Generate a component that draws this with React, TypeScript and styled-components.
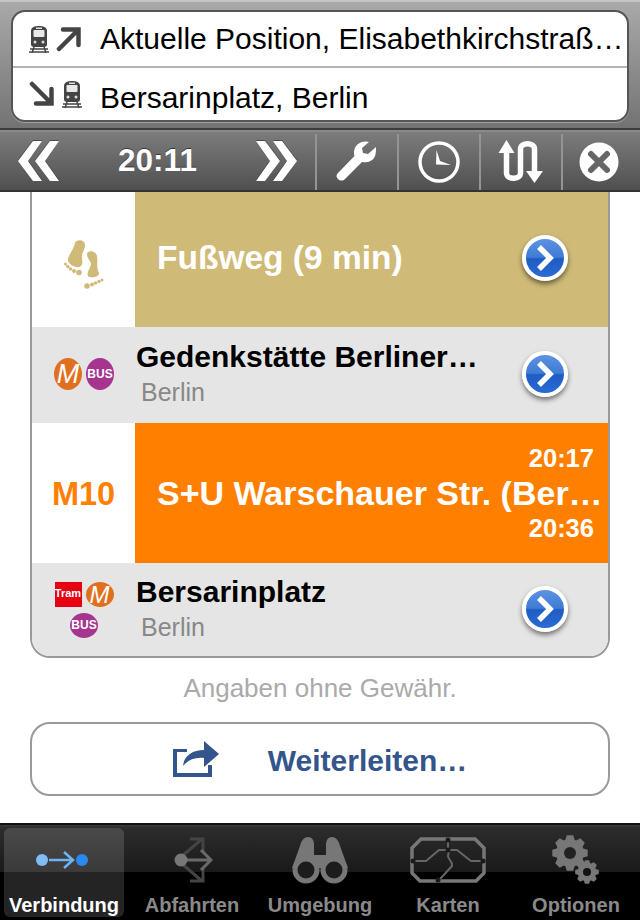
import React from 'react';
import styled, { createGlobalStyle } from 'styled-components';

const Global = createGlobalStyle`
html, body { margin: 0; padding: 0; background: #fff; }
body { font-family: "Liberation Sans", Arial, sans-serif; }
* { box-sizing: border-box; }
`;

const TrainIcon: React.FC = () => (
  <svg width="20" height="28" viewBox="0 0 20 28">
    <path d="M2 6C2 2 6 1 10 1s8 1 8 5v13c0 2-1 3-3 3H5c-2 0-3-1-3-3z" fill="#444" />
    <rect x="4.500" y="5" width="11" height="7" rx="1" fill="#e8e8e8" />
    <rect x="7" y="2.500" width="6" height="1.500" fill="#ddd" />
    <circle cx="6" cy="17" r="1.500" fill="#ddd" />
    <circle cx="14" cy="17" r="1.500" fill="#ddd" />
    <path d="M1 24h18M0 27h20M5 22l-2 6M15 22l2 6" stroke="#444" strokeWidth="1.500" fill="none" />
  </svg>
);

const ArrowUp: React.FC = () => (
  <svg width="26" height="26" viewBox="0 0 26 26">
    <path d="M3 23L22 4M7 3.500h15.500V19" stroke="#444" strokeWidth="4.500" fill="none" strokeLinecap="round" />
  </svg>
);

const ArrowDown: React.FC = () => (
  <svg width="26" height="26" viewBox="0 0 26 26">
    <path d="M3 3l19 19M22.500 8v14.500H7" stroke="#444" strokeWidth="4.500" fill="none" strokeLinecap="round" />
  </svg>
);

const DoubleChevron: React.FC<{ flip?: boolean }> = ({ flip }) => (
  <ChevronSvg width="44" height="40" viewBox="0 0 44 40" $flip={flip}>
    <path d="M16 0h9L11 20l14 20h-9L1 20zM33 0h9L28 20l14 20h-9L18 20z" fill="#fff" />
  </ChevronSvg>
);

const Wrench: React.FC = () => (
  <svg width="42" height="42" viewBox="0 0 42 42">
    <path d="M40 6l-8 7-5-1-1-5 7-6C26-1 18 3 18 12c0 2 .5 3 .5 3L2 32c-2 2-2 4 0 6s5 2 7 0l17-17s10 2 13-6c1-3 1-6 1-9z" fill="#fff" />
  </svg>
);

const Clock: React.FC = () => (
  <svg width="42" height="42" viewBox="0 0 42 42">
    <circle cx="21" cy="21" r="19" stroke="#fff" strokeWidth="3.500" fill="none" />
    <path d="M18.500 9L22 20l11 4-15-.5z" fill="#fff" />
  </svg>
);

const Swap: React.FC = () => (
  <svg width="46" height="46" viewBox="0 0 46 46">
    <path d="M8.500 6v28c0 7 14 7 14 0V10c0-7 14-7 14 0v26" stroke="#fff" strokeWidth="5.500" fill="none" />
    <path d="M0.500 14L8.500 1l8 13zM28 32h17l-8.500 12z" fill="#fff" />
  </svg>
);

const CloseIcon: React.FC = () => (
  <svg width="40" height="40" viewBox="0 0 40 40">
    <circle cx="20" cy="20" r="19.500" fill="#fff" />
    <path d="M12 12l16 16M28 12L12 28" stroke="#666" strokeWidth="6" strokeLinecap="round" />
  </svg>
);

const Feet: React.FC = () => (
  <FeetSvg width="40" height="54" viewBox="0 0 40 54">
    <g fill="#cfba78">
      <path d="M11 6C12 2 21 2 21 8c0 5-3 7-3 12 0 4 2 8-3 10-4 1-11-3-11-7 0-5 6-11 7-17z" />
      <path d="M23 17c0-4 9-4 10 2 1 5-1 11 2 17 1 4-8 6-11 3-2-3 3-9 3-12 0-3-4-5-4-10z" />
      <circle cx="1.500" cy="27" r="1.500" />
      <circle cx="3.800" cy="29.500" r="1.700" />
      <circle cx="6.500" cy="32" r="1.800" />
      <circle cx="10" cy="34" r="2" />
      <circle cx="15" cy="35.500" r="2.800" />
      <circle cx="38" cy="43" r="1.500" />
      <circle cx="35" cy="44.500" r="1.700" />
      <circle cx="31.500" cy="46" r="1.800" />
      <circle cx="28" cy="47.500" r="2" />
      <circle cx="23" cy="49" r="2.800" />
    </g>
  </FeetSvg>
);

const ShareIcon: React.FC = () => (
  <svg width="46" height="36" viewBox="0 0 46 36">
    <path d="M0 8h14v3H4v21h31V24h4v12H0z" fill="#34558b" />
    <path d="M10 25C11 15 19 9 31 9V0l15 13-15 13v-9c-9-1-16 2-21 8z" fill="#34558b" />
  </svg>
);

const ConnectionTab: React.FC = () => (
  <svg width="64" height="20" viewBox="0 0 64 20">
    <circle cx="10" cy="10" r="6" fill="#7fbdf5" />
    <path d="M17 10h24M32 2l9 8-9 8" stroke="#6db4f2" strokeWidth="2.500" fill="none" />
    <circle cx="50" cy="10" r="6" fill="#2a88f0" />
  </svg>
);

const DeparturesTab: React.FC = () => (
  <svg width="42" height="48" viewBox="0 0 42 48">
    <path d="M10 21L31 3M19 3h13v13M10 27L31 45M19 45h13V32" stroke="#444" strokeWidth="3" fill="none" />
    <path d="M12 24h27M30 14l10 10-10 10" stroke="#6a6a6a" strokeWidth="3" fill="none" />
    <circle cx="10" cy="24" r="6.500" fill="#777" />
  </svg>
);

const BinocularsTab: React.FC = () => (
  <svg width="56" height="48" viewBox="0 0 56 48">
    <path d="M8 10c1-5 4-9 8-9s6 3 6 8v10h12V9c0-5 2-8 6-8s7 4 8 9l8 22H0z" fill="#777" />
    <circle cx="14" cy="34" r="11" fill="#1c1c1c" stroke="#777" strokeWidth="5" />
    <circle cx="42" cy="34" r="11" fill="#1c1c1c" stroke="#777" strokeWidth="5" />
  </svg>
);

const MapTab: React.FC = () => (
  <svg width="76" height="46" viewBox="0 0 76 46">
    <path d="M11 2h54l9 9v25l-8 8H10l-8-8V11z" fill="none" stroke="#777" strokeWidth="3.500" />
    <path d="M2 24h14l13-11h10l-1 6c0 4 5 5 4 10l-12 13M38 2v11h9l14 11h13" fill="none" stroke="#666" strokeWidth="2" />
    <g fill="#1a1a1a">
      <circle cx="38" cy="3" r="2.500" />
      <circle cx="38" cy="13" r="2.500" />
      <circle cx="3" cy="24" r="2.500" />
      <circle cx="73" cy="24" r="2.500" />
      <circle cx="28" cy="43" r="2.500" />
    </g>
  </svg>
);

const gearPath = (cx: number, cy: number, r: number, teeth: number) => {
  const out: string[] = [];
  for (let i = 0; i < teeth; i++) {
    const a = (i / teeth) * Math.PI * 2;
    const s = Math.PI / teeth;
    const pts: [number, number][] = [
      [r * 0.78, a - s * 0.85],
      [r, a - s * 0.45],
      [r, a + s * 0.45],
      [r * 0.78, a + s * 0.85],
    ];
    pts.forEach(([d, t]) => out.push(`${(cx + d * Math.cos(t)).toFixed(1)} ${(cy + d * Math.sin(t)).toFixed(1)}`));
  }
  return 'M' + out.join('L') + 'Z';
};

const GearsTab: React.FC = () => (
  <svg width="48" height="50" viewBox="0 0 48 50">
    <path d={gearPath(18, 18, 18, 8)} fill="#777" />
    <circle cx="18" cy="18" r="6" fill="#222" />
    <path d={gearPath(35, 37, 12, 8)} fill="#777" />
    <circle cx="35" cy="37" r="4" fill="#111" />
  </svg>
);

const tabs = [
  { label: 'Verbindung', icon: <ConnectionTab />, active: true },
  { label: 'Abfahrten', icon: <DeparturesTab /> },
  { label: 'Umgebung', icon: <BinocularsTab /> },
  { label: 'Karten', icon: <MapTab /> },
  { label: 'Optionen', icon: <GearsTab /> },
];

const Disclosure: React.FC = () => (
  <DisclosureButton>
    <svg width="22" height="26" viewBox="0 0 22 26">
      <path d="M5 2l11 11L5 24" stroke="#fff" strokeWidth="5.500" fill="none" />
    </svg>
  </DisclosureButton>
);

const App: React.FC = () => {
  return (
    <Page>
      <Global />
      <Header>
        <RouteBox>
          <RouteRow>
            <RouteIcons>
              <TrainIcon />
              <ArrowUp />
            </RouteIcons>
            <RouteText>Aktuelle Position, Elisabethkirchstraß…</RouteText>
          </RouteRow>
          <RouteRow $last>
            <RouteIcons>
              <ArrowDown />
              <TrainIcon />
            </RouteIcons>
            <RouteText $last>Bersarinplatz, Berlin</RouteText>
          </RouteRow>
        </RouteBox>
      </Header>
      <Toolbar>
        <TimeGroup>
          <DoubleChevron />
          <Time>20:11</Time>
          <DoubleChevron flip />
        </TimeGroup>
        <ToolCell $width={82}><Wrench /></ToolCell>
        <ToolCell $width={82}><Clock /></ToolCell>
        <ToolCell $width={82}><Swap /></ToolCell>
        <ToolCell $width={74}><CloseIcon /></ToolCell>
      </Toolbar>
      <Content>
        <Card>
          <LegRow $height={135}>
            <LineCell><Feet /></LineCell>
            <LegBody $color="#cfba78">
              <LegTitle $size={33.5}>Fußweg (9 min)</LegTitle>
              <Disclosure />
            </LegBody>
          </LegRow>
          <StopRow $height={96}>
            <Badges>
              <MBadge $tall>M</MBadge>
              <BusBadge $tall>BUS</BusBadge>
            </Badges>
            <StopText>
              <StopName>Gedenkstätte Berliner…</StopName>
              <StopCity>Berlin</StopCity>
            </StopText>
            <Disclosure />
          </StopRow>
          <LegRow $height={140}>
            <LineCell><LineName>M10</LineName></LineCell>
            <LegBody $color="#ff8000" $stacked>
              <LegTime>20:17</LegTime>
              <LegTitle $size={34}>S+U Warschauer Str. (Ber…</LegTitle>
              <LegTime>20:36</LegTime>
            </LegBody>
          </LegRow>
          <StopRow $height={93}>
            <Badges $offset={3}>
              <TramBadge>Tram</TramBadge>
              <MBadge>M</MBadge>
              <BusBadge>BUS</BusBadge>
            </Badges>
            <StopText>
              <StopName>Bersarinplatz</StopName>
              <StopCity>Berlin</StopCity>
            </StopText>
            <Disclosure />
          </StopRow>
        </Card>
        <Disclaimer>Angaben ohne Gewähr.</Disclaimer>
        <ForwardButton>
          <ShareIcon />
          <ForwardLabel>Weiterleiten…</ForwardLabel>
        </ForwardButton>
      </Content>
      <TabBar>
        {tabs.map((t) => (
          <Tab key={t.label} $active={t.active}>
            <TabIcon>{t.icon}</TabIcon>
            <TabLabel $active={t.active}>{t.label}</TabLabel>
          </Tab>
        ))}
      </TabBar>
    </Page>
  );
};

const ChevronSvg = styled.svg<{ $flip?: boolean }>`
  transform: ${(p) => (p.$flip ? 'scaleX(-1)' : 'none')};
  filter: drop-shadow(0 -1px 0 rgba(0, 0, 0, 0.35));
`;

const FeetSvg = styled.svg`
  margin-top: 8px;
`;

const Page = styled.div`
  width: 640px;
  height: 920px;
  display: flex;
  flex-direction: column;
  overflow: hidden;
  background: #fff;
`;

const Header = styled.div`
  height: 130px;
  padding: 8px 11px 0;
  background: linear-gradient(#a9a9a9, #737373);
  border-top: 2px solid #c4c4c4;
  border-bottom: 2px solid #3c3c3c;
`;

const RouteBox = styled.div`
  height: 112px;
  background: #fff;
  border: 2px solid #555;
  border-radius: 14px;
  overflow: hidden;
  box-shadow: 0 1px 0 rgba(255, 255, 255, 0.3);
`;

const RouteRow = styled.div<{ $last?: boolean }>`
  height: ${(p) => (p.$last ? 52 : 56)}px;
  display: flex;
  align-items: center;
  padding-left: 16px;
  border-bottom: ${(p) => (p.$last ? 'none' : '2px solid #b4b4b4')};
`;

const RouteIcons = styled.div`
  width: 71px;
  flex: none;
  display: flex;
  align-items: center;
  gap: 7px;
`;

const RouteText = styled.div<{ $last?: boolean }>`
  font-size: 30px;
  color: #000;
  white-space: nowrap;
  padding-top: ${(p) => (p.$last ? 7 : 0)}px;
`;

const Toolbar = styled.div`
  height: 62px;
  display: flex;
  background: linear-gradient(#7c7c7c, #505050);
  border-top: 2px solid #8a8a8a;
  border-bottom: 2px solid #333;
`;

const TimeGroup = styled.div`
  width: 315px;
  flex: none;
  display: flex;
  align-items: center;
  justify-content: space-between;
  padding: 0 17px;
`;

const Time = styled.div`
  color: #fff;
  font-size: 31.500px;
  font-weight: bold;
  padding-bottom: 2px;
  text-shadow: 0 -1px 0 rgba(0, 0, 0, 0.5);
`;

const ToolCell = styled.div<{ $width: number }>`
  width: ${(p) => p.$width}px;
  flex: none;
  display: flex;
  align-items: center;
  justify-content: center;
  border-left: 2px solid #949494;
  margin-top: 2px;
`;

const Content = styled.div`
  flex: 1;
  display: flex;
  flex-direction: column;
  padding: 0 30px;
`;

const Card = styled.div`
  border: 2px solid #999;
  border-top: none;
  border-radius: 0 0 20px 20px;
  overflow: hidden;
`;

const LegRow = styled.div<{ $height: number }>`
  height: ${(p) => p.$height}px;
  display: flex;
  background: #fff;
`;

const LineCell = styled.div`
  width: 103px;
  flex: none;
  display: flex;
  align-items: center;
  justify-content: center;
`;

const LineName = styled.div`
  font-size: 32.500px;
  font-weight: bold;
  color: #ff8000;
  padding-top: 3px;
`;

const LegBody = styled.div<{ $color: string; $stacked?: boolean }>`
  flex: 1;
  min-width: 0;
  background: ${(p) => p.$color};
  display: flex;
  flex-direction: ${(p) => (p.$stacked ? 'column' : 'row')};
  align-items: ${(p) => (p.$stacked ? 'stretch' : 'center')};
  justify-content: ${(p) => (p.$stacked ? 'center' : 'space-between')};
  padding: ${(p) => (p.$stacked ? '0 14px 0 22px' : '0 40px 4px 22px')};
`;

const LegTitle = styled.div<{ $size: number }>`
  font-size: ${(p) => p.$size}px;
  line-height: 40px;
  font-weight: bold;
  color: #fff;
  white-space: nowrap;
`;

const LegTime = styled.div`
  font-size: 25.500px;
  font-weight: bold;
  color: #fff;
  text-align: right;
  line-height: 30px;
`;

const StopRow = styled.div<{ $height: number }>`
  height: ${(p) => p.$height}px;
  display: flex;
  align-items: center;
  background: #e5e5e5;
  padding: 0 40px 2px 0;
`;

const Badges = styled.div<{ $offset?: number }>`
  width: 104px;
  flex: none;
  display: flex;
  flex-wrap: wrap;
  justify-content: center;
  align-items: center;
  gap: 6px 4px;
  padding: ${(p) => p.$offset ?? 0}px 20px 0;
`;

const MBadge = styled.div<{ $tall?: boolean }>`
  width: 28px;
  height: ${(p) => (p.$tall ? 32 : 25)}px;
  border-radius: 50%;
  background: #e07020;
  color: #fff;
  font-style: italic;
  font-size: ${(p) => (p.$tall ? 27 : 24)}px;
  line-height: ${(p) => (p.$tall ? 32 : 25)}px;
  text-align: center;
`;

const BusBadge = styled.div<{ $tall?: boolean }>`
  width: 28px;
  height: ${(p) => (p.$tall ? 32 : 25)}px;
  border-radius: 50%;
  background: #a63590;
  color: #fff;
  font-size: 12px;
  font-weight: bold;
  line-height: ${(p) => (p.$tall ? 32 : 25)}px;
  text-align: center;
`;

const TramBadge = styled.div`
  width: 27px;
  height: 25px;
  background: #e60012;
  color: #fff;
  font-size: 11px;
  font-weight: bold;
  line-height: 23px;
  text-align: center;
`;

const StopText = styled.div`
  flex: 1;
  min-width: 0;
  display: flex;
  flex-direction: column;
  gap: 4px;
`;

const StopName = styled.div`
  font-size: 30px;
  font-weight: bold;
  color: #000;
  white-space: nowrap;
  line-height: 32px;
`;

const StopCity = styled.div`
  font-size: 25px;
  color: #888;
  padding-left: 5px;
  line-height: 30px;
`;

const DisclosureButton = styled.div`
  width: 46px;
  height: 46px;
  flex: none;
  border-radius: 50%;
  border: 4px solid #fff;
  background: linear-gradient(#5d93e0 0%, #3f7bd6 48%, #1f5cc4 52%, #2a6bd4 100%);
  box-shadow: 0 3px 5px rgba(0, 0, 0, 0.5);
  display: flex;
  align-items: center;
  justify-content: center;
`;

const Disclaimer = styled.div`
  margin-top: 14px;
  text-align: center;
  font-size: 26px;
  line-height: 32px;
  color: #aaa;
`;

const ForwardButton = styled.div`
  margin-top: 18px;
  height: 74px;
  border: 2px solid #999;
  border-radius: 20px;
  display: flex;
  align-items: center;
  justify-content: center;
  gap: 49px;
  background: #fff;
`;

const ForwardLabel = styled.div`
  font-size: 30px;
  font-weight: bold;
  color: #34558b;
  padding-top: 3px;
`;

const TabBar = styled.div`
  height: 97px;
  flex: none;
  display: grid;
  grid-template-columns: repeat(5, 1fr);
  padding: 3px 0 4px;
  background: linear-gradient(#3a3a3a 0, #2c2c2c 3px, #1a1a1a 47px, #000 47px);
  border-top: 2px solid #111;
`;

const Tab = styled.div<{ $active?: boolean }>`
  margin: 0 4px;
  border-radius: 6px;
  display: flex;
  flex-direction: column;
  align-items: center;
  background: ${(p) => (p.$active ? 'rgba(255,255,255,0.14)' : 'transparent')};
`;

const TabIcon = styled.div`
  height: 64px;
  flex: none;
  display: flex;
  align-items: center;
  justify-content: center;
`;

const TabLabel = styled.div<{ $active?: boolean }>`
  font-size: 20px;
  font-weight: bold;
  color: ${(p) => (p.$active ? '#fff' : '#8a8a8a')};
  white-space: nowrap;
  padding-top: 2px;
`;

export default App;
